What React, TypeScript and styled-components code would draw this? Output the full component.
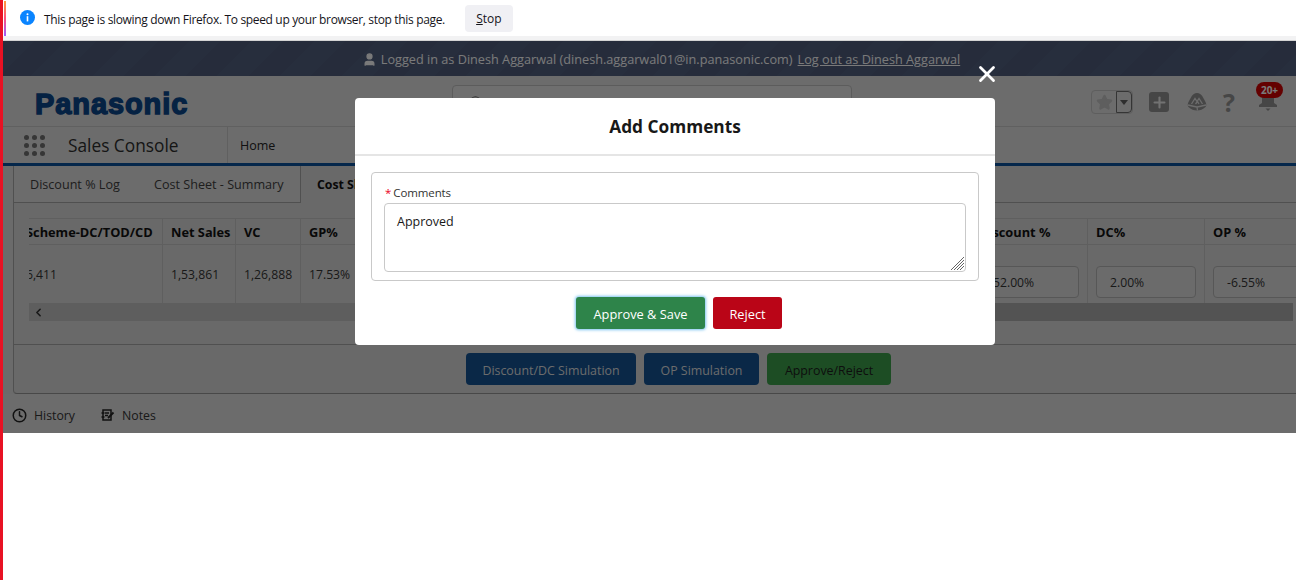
import React from "react";
import styled, { createGlobalStyle } from "styled-components";
import { Clock, Star, Plus, ChevronLeft, X, Search, User } from "lucide-react";

const Global = createGlobalStyle`
  html, body { margin: 0; padding: 0; background: #fff; }
  body { font-family: "Open Sans", "Noto Sans", sans-serif; color: #111; }
  * { box-sizing: border-box; }
`;

const Shell = styled.div`
  display: flex;
  width: 1296px;
  height: 580px;
  overflow: hidden;
  background: #fff;
`;
const RedEdge = styled.div`
  width: 3px;
  background: #e81123;
  flex: none;
`;
const Main = styled.div`
  flex: 1;
  min-width: 0;
  display: flex;
  flex-direction: column;
`;
const Notice = styled.div`
  position: relative;
  height: 41px;
  flex: none;
  display: flex;
  align-items: center;
  padding: 0 0 4px 17px;
  background: #fff;
  border-bottom: 1px solid #d4d4d4;
  box-shadow: inset 0 -4px 0 #f2f2f3;
  font-size: 12px;
  color: #15141a;
`;
const Gradient = styled.i`
  position: absolute;
  left: 1px;
  top: 1px;
  width: 2px;
  height: 35px;
  background: linear-gradient(#ff9a3c, #ff4f7e 50%, #9a5cff);
`;
const InfoMark = styled.svg`
  flex: none;
  margin-top: -2px;
`;
const NoticeText = styled.span`
  margin: 3px 0 0 9px;
  letter-spacing: -0.34px;
`;
const StopButton = styled.button`
  margin-left: 20px;
  width: 48px;
  height: 27px;
  padding: 1px 0 0;
  border: 0;
  border-radius: 4px;
  background: #f0f0f4;
  font: inherit;
  color: #15141a;
  u { text-decoration: underline; }
`;
const Page = styled.div`
  position: relative;
  height: 392px;
  flex: none;
  display: flex;
  flex-direction: column;
  background: #d6d6d6;
`;
const LoginBar = styled.div`
  height: 35px;
  flex: none;
  display: flex;
  align-items: center;
  justify-content: center;
  gap: 4px;
  padding: 1px 0 0 23px;
  font-size: 12.7px;
  color: #f4f4f4;
  background: repeating-linear-gradient(135deg, #4f5c7b 0 22px, #4c5977 22px 44px);
  a { margin-left: 1px; text-decoration: underline; color: #f4f4f4; }
`;
const Header = styled.div`
  height: 51px;
  flex: none;
  display: flex;
  align-items: center;
  padding: 3px 0 0 32px;
  background: #d8d8d8;
  border-bottom: 1px solid #c0c0c0;
`;
const Logo = styled.div`
  width: 417px;
  margin-top: 4px;
  font-family: "Liberation Sans", Arial, sans-serif;
  font-weight: 700;
  font-size: 29px;
  letter-spacing: 0.9px;
  color: #0a4486;
  -webkit-text-stroke: 1.4px #0a4486;
`;
const SearchBox = styled.div`
  width: 400px;
  height: 34px;
  display: flex;
  align-items: center;
  align-self: flex-start;
  margin-top: 6px;
  padding-left: 16px;
  border: 1px solid #b8b8b8;
  border-radius: 4px;
  background: #dedede;
  color: #666;
`;
const Tools = styled.div`
  margin-left: auto;
  display: flex;
  align-items: center;
  padding-right: 15px;
  margin-top: -1px;
`;
const FavGroup = styled.div`
  display: flex;
  width: 42px;
  height: 24px;
  margin-right: 16px;
  border-radius: 4px;
  border: 1px solid #bcbcbc;
  overflow: hidden;
`;
const FavStar = styled.div`
  width: 24px;
  display: flex;
  align-items: center;
  justify-content: center;
  color: #bcbcbc;
`;
const FavMenu = styled.div`
  flex: 1;
  display: flex;
  align-items: center;
  justify-content: center;
  border: 1px solid #6a6a6a;
  border-radius: 0 4px 4px 0;
  &::after {
    content: "";
    border: 4px solid transparent;
    border-top: 5px solid #5c5c5c;
    border-bottom: 0;
  }
`;
const PlusBox = styled.div`
  width: 20px;
  height: 20px;
  margin-right: 18px;
  display: flex;
  align-items: center;
  justify-content: center;
  border-radius: 3px;
  background: #8c8c8c;
  color: #e4e4e4;
`;
const Help = styled.div`
  width: 20px;
  margin: 0 19px 0 12px;
  text-align: center;
  font-size: 25px;
  font-weight: 700;
  line-height: 24px;
  color: #8c8c8c;
`;
const BellWrap = styled.div`
  position: relative;
  width: 20px;
  height: 20px;
  margin-right: 3px;
  color: #8c8c8c;
`;
const Badge = styled.span`
  position: absolute;
  top: -10px;
  left: -2px;
  width: 27px;
  height: 16px;
  border-radius: 8px;
  background: #c80000;
  color: #f4f4f4;
  font-size: 10px;
  font-weight: 700;
  line-height: 16px;
  text-align: center;
`;
const Nav = styled.div`
  height: 39px;
  flex: none;
  display: flex;
  align-items: center;
  padding-left: 21px;
  background: #d8d8d8;
  border-bottom: 3px solid #0a4f96;
`;
const Waffle = styled.div`
  display: grid;
  grid-template-columns: repeat(3, 5px);
  gap: 3px;
  width: 21px;
  margin-right: 23px;
  i { width: 5px; height: 5px; border-radius: 50%; background: #6c6c6c; }
`;
const AppName = styled.div`
  width: 159px;
  font-size: 17.3px;
  color: #2c2c2c;
`;
const HomeTab = styled.div`
  align-self: stretch;
  display: flex;
  align-items: center;
  padding-left: 12px;
  border-left: 1px solid #c0c0c0;
  font-size: 12.5px;
  color: #222;
`;
const Card = styled.div`
  flex: 1;
  margin-left: 10px;
  display: flex;
  flex-direction: column;
  border-left: 1px solid #a0a0a0;
  border-bottom: 1px solid #909090;
  border-radius: 0 0 0 4px;
  background: #d2d2d2;
  min-height: 0;
`;
const Tabs = styled.div`
  height: 37px;
  flex: none;
  display: flex;
  border-bottom: 1px solid #a0a0a0;
`;
const Tab = styled.div<{ $w: number; $active?: boolean }>`
  width: ${(p) => p.$w}px;
  display: flex;
  align-items: center;
  padding-left: 16px;
  font-size: ${(p) => (p.$active ? "12.3px" : "12.6px")};
  color: ${(p) => (p.$active ? "#111" : "#3c3c3c")};
  font-weight: ${(p) => (p.$active ? 700 : 400)};
  background: ${(p) => (p.$active ? "#d2d2d2" : "#d8d8d8")};
  ${(p) => (p.$active ? "margin-bottom:-1px;border-left:1px solid #a0a0a0;" : "")}
`;
const TableArea = styled.div`
  height: 142px;
  flex: none;
  padding: 15px 0 0 15px;
  border-bottom: 1px solid #a0a0a0;
`;
const TableClip = styled.div`
  overflow: hidden;
`;
const Grid = styled.div`
  display: grid;
  grid-template-columns: 145px 73px 65px 670px 117px 117px 100px;
  grid-template-rows: 27px 58px;
  margin-left: -11px;
`;
const Cell = styled.div<{ $head?: boolean }>`
  display: flex;
  align-items: center;
  padding-left: 8px;
  border-top: ${(p) => (p.$head ? "1px solid #bebebe" : "0")};
  border-bottom: ${(p) => (p.$head ? "1px solid #bebebe" : "0")};
  border-right: 1px solid #bebebe;
  font-size: ${(p) => (p.$head ? "12.8px" : "12.2px")};
  font-weight: ${(p) => (p.$head ? 700 : 400)};
  color: ${(p) => (p.$head ? "#111" : "#333")};
  white-space: nowrap;
`;
const ValueBox = styled.div`
  width: 100px;
  height: 32px;
  margin-top: 16px;
  padding: 1px 0 0 13px;
  display: flex;
  align-items: center;
  border: 1px solid #aeaeae;
  border-radius: 4px;
  background: #d6d6d6;
`;
const ScrollBar = styled.div`
  height: 18px;
  margin-right: 3px;
  display: flex;
  align-items: center;
  padding-left: 3px;
  background: linear-gradient(90deg, #bcbcbc 50%, #a6a6a6 50%);
  color: #333;
`;
const Actions = styled.div`
  flex: 1;
  display: flex;
  align-items: center;
  justify-content: center;
  gap: 8px;
  padding-left: 47px;
`;
const DimButton = styled.div<{ $w: number; $green?: boolean }>`
  width: ${(p) => p.$w}px;
  height: 32px;
  padding-top: 2px;
  display: flex;
  align-items: center;
  justify-content: center;
  border-radius: 4px;
  font-size: 12.4px;
  color: ${(p) => (p.$green ? "#1c1c1c" : "#d8d8d8")};
  background: ${(p) => (p.$green ? "#3a9a48" : "#14508f")};
`;
const Footer = styled.div`
  height: 39px;
  flex: none;
  display: flex;
  align-items: center;
  gap: 26px;
  padding: 3px 0 0 9px;
  font-size: 12.3px;
  color: #333;
  background: #d8d8d8;
`;
const FootItem = styled.div`
  display: flex;
  align-items: center;
  gap: 7px;
`;
const Dim = styled.div`
  position: absolute;
  inset: 0;
  background: rgba(0, 0, 0, 0.5);
`;
const CloseBtn = styled.div`
  position: absolute;
  left: 971px;
  top: 20px;
  color: #fff;
  line-height: 0;
`;
const Modal = styled.div`
  position: absolute;
  left: 352px;
  top: 57px;
  width: 640px;
  height: 247px;
  display: flex;
  flex-direction: column;
  border-radius: 4px;
  background: #fff;
`;
const ModalHead = styled.div`
  height: 58px;
  flex: none;
  display: flex;
  align-items: center;
  justify-content: center;
  padding-top: 1px;
  border-bottom: 2px solid #e5e5e5;
  font-size: 17.3px;
  font-weight: 700;
  color: #181818;
`;
const ModalBody = styled.div`
  padding: 16px;
`;
const Fieldset = styled.div`
  height: 109px;
  padding: 12px 12px 0;
  border: 1px solid #c9c9c9;
  border-radius: 4px;
`;
const Label = styled.div`
  display: flex;
  align-items: center;
  gap: 2px;
  height: 18px;
  padding: 0 0 3px 1px;
  font-size: 11.5px;
  color: #333;
  letter-spacing: -0.1px;
  b { color: #ea001e; font-weight: 400; }
`;
const TextBox = styled.div`
  position: relative;
  height: 69px;
  padding: 9px 12px;
  border: 1px solid #c9c9c9;
  border-radius: 4px;
  font-size: 12.5px;
  color: #181818;
`;
const Grip = styled.svg`
  position: absolute;
  right: 0;
  bottom: 0;
`;
const ModalActions = styled.div`
  display: flex;
  justify-content: center;
  gap: 8px;
  padding-left: 8px;
`;
const ModalButton = styled.button<{ $w: number; $bg: string; $focus?: boolean }>`
  width: ${(p) => p.$w}px;
  height: 32px;
  padding: 1px 0 0;
  border: 0;
  border-radius: 3px;
  background: ${(p) => p.$bg};
  color: #fff;
  font: 12.8px "Open Sans", sans-serif;
  box-shadow: ${(p) => (p.$focus ? "0 0 3px 1px #7cc4f0" : "none")};
`;

function TrailIcon() {
  return (
    <svg width="20" height="20" viewBox="0 0 20 20">
      <path d="M10 1 C12.5 1 14 2.5 15.5 4.5 L18.5 10 C19.5 12 19.5 14 18.5 15 C16 17.5 13 18.5 10 18.5 C7 18.5 4 17.5 1.5 15 C.5 14 .5 12 1.5 10 L4.5 4.5 C6 2.5 7.5 1 10 1 Z" fill="#8c8c8c" />
      <path d="M1 13 C5 14 7 14.5 10 15 L10.5 18.5 M10 15 C13 14.5 15 14 19 13 M4.5 12 L8 6.5 L10 9.5 L12 6.5 L15.5 12 M8.5 12 L10.5 9.5 L12 12" stroke="#d8d8d8" strokeWidth="1.3" fill="none" />
    </svg>
  );
}
function BellIcon() {
  return (
    <svg width="20" height="20" viewBox="0 0 20 20">
      <path d="M4 4 h12 v7 l3 2 v2 H1 v-2 l3 -2 Z" fill="currentColor" />
      <path d="M7.5 16.5 h5 l-2.5 2.5 Z" fill="currentColor" />
    </svg>
  );
}
function NotesIcon() {
  return (
    <svg width="14" height="14" viewBox="0 0 14 14" fill="none" stroke="#222" strokeWidth="1.5">
      <path d="M2 2 h8 v10 h-8 Z M.5 5 h3 M.5 9 h3" />
      <path d="M4 5 h4 M4 7.5 h3" />
      <path d="M7 10 l5.5-5.5" strokeWidth="1.8" />
    </svg>
  );
}

export default function App() {
  const dots = Array.from({ length: 9 }, (_, i) => <i key={i} />);
  return (
    <Shell>
      <Global />
      <RedEdge />
      <Main>
        <Notice>
          <Gradient />
          <InfoMark width="15" height="15" viewBox="0 0 15 15">
            <circle cx="7.5" cy="7.5" r="7.5" fill="#0a84ff" />
            <circle cx="7.5" cy="4.2" r="1" fill="#fff" />
            <rect x="6.7" y="6.2" width="1.6" height="5.2" fill="#fff" />
          </InfoMark>
          <NoticeText>This page is slowing down Firefox. To speed up your browser, stop this page.</NoticeText>
          <StopButton>
            <u>S</u>top
          </StopButton>
        </Notice>
        <Page>
          <LoginBar>
            <User size={15} fill="#f4f4f4" color="#f4f4f4" />
            Logged in as Dinesh Aggarwal (dinesh.aggarwal01@in.panasonic.com)
            <a>Log out as Dinesh Aggarwal</a>
          </LoginBar>
          <Header>
            <Logo>Panasonic</Logo>
            <SearchBox>
              <Search size={14} />
            </SearchBox>
            <Tools>
              <FavGroup>
                <FavStar>
                  <Star size={17} fill="#bcbcbc" />
                </FavStar>
                <FavMenu />
              </FavGroup>
              <PlusBox>
                <Plus size={17} strokeWidth={3} />
              </PlusBox>
              <TrailIcon />
              <Help>?</Help>
              <BellWrap>
                <BellIcon />
                <Badge>20+</Badge>
              </BellWrap>
            </Tools>
          </Header>
          <Nav>
            <Waffle>{dots}</Waffle>
            <AppName>Sales Console</AppName>
            <HomeTab>Home</HomeTab>
          </Nav>
          <Card>
            <Tabs>
              <Tab $w={124}>Discount % Log</Tab>
              <Tab $w={162}>Cost Sheet - Summary</Tab>
              <Tab $active $w={200}>Cost Sheet</Tab>
            </Tabs>
            <TableArea>
              <TableClip>
                <Grid>
                  <Cell $head>Scheme-DC/TOD/CD</Cell>
                  <Cell $head>Net Sales</Cell>
                  <Cell $head>VC</Cell>
                  <Cell $head>GP%</Cell>
                  <Cell $head>Discount %</Cell>
                  <Cell $head>DC%</Cell>
                  <Cell $head>OP %</Cell>
                  <Cell>6,411</Cell>
                  <Cell>1,53,861</Cell>
                  <Cell>1,26,888</Cell>
                  <Cell>17.53%</Cell>
                  <Cell><ValueBox>52.00%</ValueBox></Cell>
                  <Cell><ValueBox>2.00%</ValueBox></Cell>
                  <Cell><ValueBox>-6.55%</ValueBox></Cell>
                </Grid>
                <ScrollBar>
                  <ChevronLeft size={13} strokeWidth={3} />
                </ScrollBar>
              </TableClip>
            </TableArea>
            <Actions>
              <DimButton $w={170}>Discount/DC Simulation</DimButton>
              <DimButton $w={115}>OP Simulation</DimButton>
              <DimButton $w={124} $green>Approve/Reject</DimButton>
            </Actions>
          </Card>
          <Footer>
            <FootItem>
              <Clock size={15} color="#222" strokeWidth={2.4} />
              History
            </FootItem>
            <FootItem>
              <NotesIcon />
              Notes
            </FootItem>
          </Footer>
          <Dim />
          <CloseBtn>
            <X size={26} strokeWidth={2.6} />
          </CloseBtn>
          <Modal>
            <ModalHead>Add Comments</ModalHead>
            <ModalBody>
              <Fieldset>
                <Label>
                  <b>*</b>Comments
                </Label>
                <TextBox>
                  Approved
                  <Grip width="16" height="16" viewBox="0 0 16 16" stroke="#666" strokeWidth="1">
                    <path d="M2 15 L15 2 M5 15 L15 5 M8 15 L15 8 M11 15 L15 11" />
                  </Grip>
                </TextBox>
              </Fieldset>
            </ModalBody>
            <ModalActions>
              <ModalButton $w={129} $bg="#2e844a" $focus>Approve &amp; Save</ModalButton>
              <ModalButton $w={69} $bg="#ba0517">Reject</ModalButton>
            </ModalActions>
          </Modal>
        </Page>
      </Main>
    </Shell>
  );
}
